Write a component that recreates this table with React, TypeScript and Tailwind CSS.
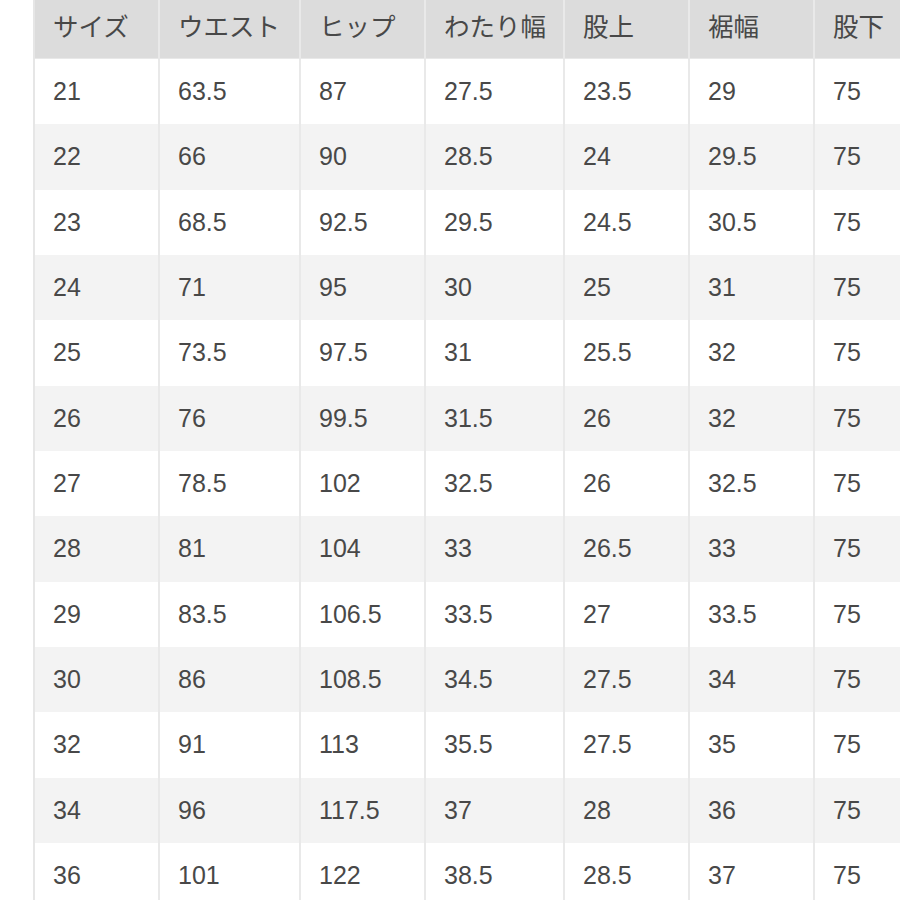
import React from "react";

const headers = ["サイズ", "ウエスト", "ヒップ", "わたり幅", "股上", "裾幅", "股下"];
const rows: string[][] = [
  ["21", "63.5", "87", "27.5", "23.5", "29", "75"],
  ["22", "66", "90", "28.5", "24", "29.5", "75"],
  ["23", "68.5", "92.5", "29.5", "24.5", "30.5", "75"],
  ["24", "71", "95", "30", "25", "31", "75"],
  ["25", "73.5", "97.5", "31", "25.5", "32", "75"],
  ["26", "76", "99.5", "31.5", "26", "32", "75"],
  ["27", "78.5", "102", "32.5", "26", "32.5", "75"],
  ["28", "81", "104", "33", "26.5", "33", "75"],
  ["29", "83.5", "106.5", "33.5", "27", "33.5", "75"],
  ["30", "86", "108.5", "34.5", "27.5", "34", "75"],
  ["32", "91", "113", "35.5", "27.5", "35", "75"],
  ["34", "96", "117.5", "37", "28", "36", "75"],
  ["36", "101", "122", "38.5", "28.5", "37", "75"],
];
const widths = ["w-[125px]", "w-[141px]", "w-[125px]", "w-[139px]", "w-[125px]", "w-[125px]", "w-[125px]"];

export default function App() {
  return (
    <div
      className="w-[900px] h-[900px] overflow-hidden bg-white pl-[33px]"
      style={{ fontFamily: '"Liberation Sans", "Noto Sans CJK JP", sans-serif' }}
    >
      <div className="w-[1000px] border-l-2 border-[#e6e6e6]">
        <div className="flex h-[59px] bg-[#dcdcdc] border-b border-[#e8e8e8]">
          {headers.map((h, i) => (
            <div
              key={i}
              className={`${widths[i]} shrink-0 flex items-center pl-[18px] pb-[4px] text-[25.5px] text-[#484848] border-r-2 border-[#e9e9e9]`}
            >
              {h}
            </div>
          ))}
        </div>
        {rows.map((r, ri) => (
          <div key={ri} className={`flex h-[65.33px] ${ri % 2 === 1 ? "bg-[#f3f3f3]" : "bg-white"}`}>
            {r.map((c, ci) => (
              <div
                key={ci}
                className={`${widths[ci]} shrink-0 flex items-center pl-[18px] text-[25px] text-[#484848] border-r-2 border-[#e9e9e9]`}
              >
                {c}
              </div>
            ))}
          </div>
        ))}
      </div>
    </div>
  );
}
